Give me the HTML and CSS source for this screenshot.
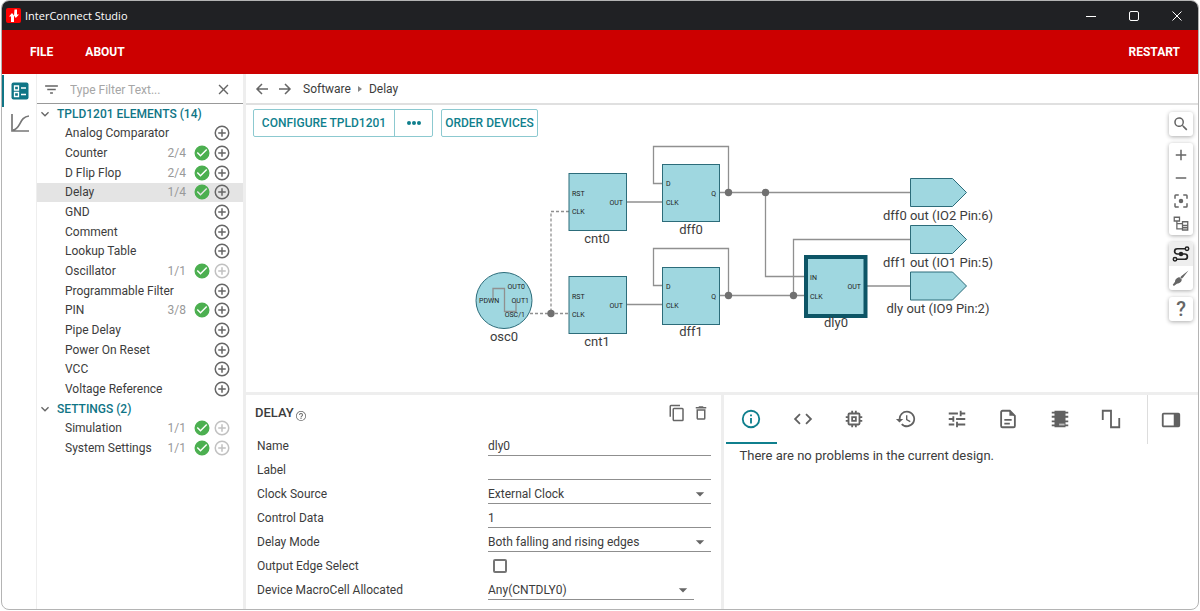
FILE: index.html
```html
<!DOCTYPE html>
<html lang="en">
<head>
<meta charset="utf-8">
<title>InterConnect Studio</title>
<link rel="stylesheet" href="styles.css">
</head>
<body>
<svg class="defs" aria-hidden="true">
  <symbol id="plus" viewBox="0 0 24 24"><path d="M13 7h-2v4H7v2h4v4h2v-4h4v-2h-4V7zm-1-5a10 10 0 1 0 0 20 10 10 0 0 0 0-20zm0 18a8 8 0 1 1 0-16 8 8 0 0 1 0 16z"/></symbol>
  <symbol id="check" viewBox="0 0 24 24"><path d="M12 2a10 10 0 1 0 0 20 10 10 0 0 0 0-20zm-2 15-5-5 1.400-1.400 3.600 3.600 7.600-7.600L19 8l-9 9z"/></symbol>
  <symbol id="chevron" viewBox="0 0 24 24"><path d="M7.400 8.600 12 13.200l4.600-4.600L18 10l-6 6-6-6z"/></symbol>
  <symbol id="caret" viewBox="0 0 24 24"><path d="m7 10 5 5 5-5z"/></symbol>
  <symbol id="cross" viewBox="0 0 24 24"><path d="M19 6.400 17.600 5 12 10.600 6.400 5 5 6.400l5.600 5.600L5 17.600 6.400 19l5.600-5.600 5.600 5.600 1.400-1.400-5.600-5.600z"/></symbol>
</svg>
<div class="window">
  <header class="titlebar">
    <svg class="logo" viewBox="0 0 15 15"><rect width="15" height="15" rx="2" fill="#f00"/><path d="M5 14V8.500H3L6 5l2 2.500V14zM8.500 1.500h2.500v5h2L9.800 10 8 7.500z" fill="#fff"/></svg>
    <span class="app-name">InterConnect Studio</span>
    <div class="window-controls">
      <button aria-label="Minimize"><svg viewBox="0 0 12 12"><path d="M1 6.500h10"/></svg></button>
      <button aria-label="Maximize"><svg viewBox="0 0 12 12"><rect x="1.500" y="1.500" width="9" height="9" rx="1.500"/></svg></button>
      <button aria-label="Close"><svg viewBox="0 0 12 12"><path d="m1.500 1.500 9 9m0-9-9 9"/></svg></button>
    </div>
  </header>
  <nav class="menubar">
    <button>FILE</button>
    <button>ABOUT</button>
    <button class="restart">RESTART</button>
  </nav>
  <div class="workspace">
    <nav class="rail">
      <button class="active" aria-label="Elements"><svg viewBox="0 0 18 18"><rect width="17" height="17" x=".5" y=".5" rx="2" fill="#0f7586"/><path d="M3.500 4h4v4h-4zM3.500 10.500h4v4h-4z" fill="none" stroke="#fff" stroke-width="1.300"/><path d="M10 6h5M10 12.500h5" stroke="#fff" stroke-width="1.500"/></svg></button>
      <button aria-label="Plots"><svg viewBox="0 0 18 18"><path d="M1 0v17h17M2 16C10 15 8 3 18 2" fill="none" stroke="#777" stroke-width="1.700"/></svg></button>
    </nav>
    <aside class="sidebar">
      <div class="filter">
        <svg viewBox="0 0 24 24"><path d="M10 18h4v-2h-4v2zM3 6v2h18V6H3zm3 7h12v-2H6v2z"/></svg>
        <input type="text" placeholder="Type Filter Text..." aria-label="Filter">
        <button aria-label="Clear filter"><svg viewBox="0 0 24 24"><use href="#cross"/></svg></button>
      </div>
      <div class="tree">
        <button class="group"><svg><use href="#chevron"/></svg>TPLD1201 ELEMENTS (14)</button>
        <div class="item"><a href="#">Analog Comparator</a><button aria-label="Add Analog Comparator"><svg><use href="#plus"/></svg></button></div>
        <div class="item"><a href="#">Counter</a><span>2/4</span><svg class="ok"><use href="#check"/></svg><button aria-label="Add Counter"><svg><use href="#plus"/></svg></button></div>
        <div class="item"><a href="#">D Flip Flop</a><span>2/4</span><svg class="ok"><use href="#check"/></svg><button aria-label="Add D Flip Flop"><svg><use href="#plus"/></svg></button></div>
        <div class="item selected"><a href="#">Delay</a><span>1/4</span><svg class="ok"><use href="#check"/></svg><button aria-label="Add Delay"><svg><use href="#plus"/></svg></button></div>
        <div class="item"><a href="#">GND</a><button aria-label="Add GND"><svg><use href="#plus"/></svg></button></div>
        <div class="item"><a href="#">Comment</a><button aria-label="Add Comment"><svg><use href="#plus"/></svg></button></div>
        <div class="item"><a href="#">Lookup Table</a><button aria-label="Add Lookup Table"><svg><use href="#plus"/></svg></button></div>
        <div class="item"><a href="#">Oscillator</a><span>1/1</span><svg class="ok"><use href="#check"/></svg><button disabled aria-label="Add Oscillator"><svg><use href="#plus"/></svg></button></div>
        <div class="item"><a href="#">Programmable Filter</a><button aria-label="Add Programmable Filter"><svg><use href="#plus"/></svg></button></div>
        <div class="item"><a href="#">PIN</a><span>3/8</span><svg class="ok"><use href="#check"/></svg><button aria-label="Add PIN"><svg><use href="#plus"/></svg></button></div>
        <div class="item"><a href="#">Pipe Delay</a><button aria-label="Add Pipe Delay"><svg><use href="#plus"/></svg></button></div>
        <div class="item"><a href="#">Power On Reset</a><button aria-label="Add Power On Reset"><svg><use href="#plus"/></svg></button></div>
        <div class="item"><a href="#">VCC</a><button aria-label="Add VCC"><svg><use href="#plus"/></svg></button></div>
        <div class="item"><a href="#">Voltage Reference</a><button aria-label="Add Voltage Reference"><svg><use href="#plus"/></svg></button></div>
        <button class="group"><svg><use href="#chevron"/></svg>SETTINGS (2)</button>
        <div class="item"><a href="#">Simulation</a><span>1/1</span><svg class="ok"><use href="#check"/></svg><button disabled aria-label="Add Simulation"><svg><use href="#plus"/></svg></button></div>
        <div class="item"><a href="#">System Settings</a><span>1/1</span><svg class="ok"><use href="#check"/></svg><button disabled aria-label="Add System Settings"><svg><use href="#plus"/></svg></button></div>
      </div>
    </aside>
    <main class="content">
      <div class="breadcrumb">
        <button aria-label="Back"><svg viewBox="0 0 14 14"><path d="M13 7H2m5-5L2 7l5 5"/></svg></button>
        <button aria-label="Forward"><svg viewBox="0 0 14 14"><path d="M1 7h11M7 2l5 5-5 5"/></svg></button>
        <a href="#">Software</a>
        <svg class="sep" viewBox="0 0 4 8"><path d="m0 1 4 3-4 3z"/></svg>
        <a href="#">Delay</a>
      </div>
      <section class="canvas">
        <svg class="diagram" role="img" aria-label="Circuit diagram">
          <g transform="translate(-246 -105)">
            <g class="wire">
              <path d="M627 202h35M662 183.500h-8.500v-37h75v46M720 192.500h190M765.500 192.500v84H805"/>
              <path d="M627 304.500h35M662 285.500h-8.500v-37h75v47M720 295.500h85M793.500 295.500v-56H910M867 286h43"/>
              <path class="dashed" d="M569 211.500h-18v102M530 313.500h39"/>
            </g>
            <g class="block">
              <rect x="569" y="173.500" width="57.500" height="57"/>
              <rect x="662.500" y="164.500" width="57" height="57"/>
              <rect x="569" y="276.500" width="57.500" height="57"/>
              <rect x="662.500" y="267.500" width="57" height="57"/>
              <circle cx="504" cy="300.500" r="28"/>
              <path d="M910.500 178.500h42l14 14-14 14h-42zM910.500 225.500h42l14 14-14 14h-42zM910.500 272h42l14 14-14 14h-42z"/>
              <rect class="current" x="806" y="257" width="59.500" height="59"/>
            </g>
            <path class="wire" d="M493 300v-11.500h11.500v23H516V302"/>
            <g class="dot"><circle cx="728.500" cy="192.500" r="3.700"/><circle cx="765.500" cy="192.500" r="3.700"/><circle cx="728.500" cy="295.500" r="3.700"/><circle cx="793.500" cy="295.500" r="3.700"/><circle cx="551" cy="313.500" r="3.700"/></g>
            <g class="port">
              <text x="572" y="196">RST</text><text x="572" y="214">CLK</text><text class="end" x="623" y="205">OUT</text>
              <text x="666" y="186">D</text><text x="666" y="205">CLK</text><text class="end" x="716" y="196">Q</text>
              <text x="572" y="299">RST</text><text x="572" y="317">CLK</text><text class="end" x="623" y="308">OUT</text>
              <text x="666" y="289">D</text><text x="666" y="308">CLK</text><text class="end" x="716" y="299">Q</text>
              <text x="810" y="280">IN</text><text x="810" y="299">CLK</text><text class="end" x="861" y="289">OUT</text>
              <text x="479" y="303">PDWN</text><text class="end" x="525" y="289">OUT0</text><text class="end" x="529" y="303">OUT1</text><text class="end" x="525" y="317">OSC/1</text>
            </g>
            <g class="name">
              <text x="597" y="243">cnt0</text><text x="691" y="234">dff0</text><text x="597" y="346">cnt1</text><text x="691" y="336">dff1</text><text x="504" y="341">osc0</text><text x="836" y="327">dly0</text>
              <text x="938" y="220">dff0 out (IO2 Pin:6)</text><text x="938" y="267">dff1 out (IO1 Pin:5)</text><text x="938" y="313">dly out (IO9 Pin:2)</text>
            </g>
          </g>
        </svg>
        <div class="actions">
          <div class="split"><button>CONFIGURE TPLD1201</button><button class="more" aria-label="More"><svg viewBox="0 0 14 4"><circle cx="2" cy="2" r="2"/><circle cx="7" cy="2" r="2"/><circle cx="12" cy="2" r="2"/></svg></button></div>
          <button class="order">ORDER DEVICES</button>
        </div>
        <div class="tools">
          <div><button aria-label="Search"><svg viewBox="0 0 24 24"><path d="M15.500 14h-.8l-.3-.3a6.500 6.500 0 1 0-.7.7l.3.3v.8l5 5 1.500-1.500-5-5zm-6 0a4.500 4.500 0 1 1 0-9 4.500 4.500 0 0 1 0 9z"/></svg></button></div>
          <div>
            <button aria-label="Zoom in"><svg viewBox="0 0 24 24"><path d="M19 13h-6v6h-2v-6H5v-2h6V5h2v6h6z"/></svg></button>
            <button aria-label="Zoom out"><svg viewBox="0 0 24 24"><path d="M19 13H5v-2h14z"/></svg></button>
            <button aria-label="Fit"><svg viewBox="0 0 24 24"><path d="M5 15H3v4c0 1.100.9 2 2 2h4v-2H5v-4zM5 5h4V3H5a2 2 0 0 0-2 2v4h2V5zm14-2h-4v2h4v4h2V5a2 2 0 0 0-2-2zm0 16h-4v2h4a2 2 0 0 0 2-2v-4h-2v4zM12 9a3 3 0 1 0 0 6 3 3 0 0 0 0-6z"/></svg></button>
            <button aria-label="Auto layout"><svg viewBox="0 0 24 24"><path d="M3 3h7v5H3zM14 9h7v5h-7zM14 14h7v6h-7zM6.500 8v10.500H14M6.500 11.500H14M14 17h7" fill="none" stroke="#666" stroke-width="1.700"/></svg></button>
          </div>
          <div>
            <button class="on" aria-label="Wires"><svg viewBox="0 0 24 24"><path d="M19 5H7a3.500 3.500 0 0 0 0 7h10a3.500 3.500 0 0 1 0 7H5" fill="none" stroke="#222" stroke-width="2.300"/><circle cx="12" cy="12" r="3" fill="#222"/><circle cx="20" cy="5" r="2.300" fill="#eee" stroke="#222" stroke-width="2"/><circle cx="4" cy="19" r="2.300" fill="#eee" stroke="#222" stroke-width="2"/></svg></button>
            <button aria-label="Probe"><svg viewBox="0 0 24 24"><path d="m22 2-9 7-2 2 2 2 2-2zM10 11c-3 0-6 3-6 6l-3 4 1.500 1.500 4-3c4 0 6.500-3 6.500-5.500z"/></svg></button>
          </div>
          <div><button class="help" aria-label="Help">?</button></div>
        </div>
      </section>
      <div class="bottom">
        <section class="properties">
          <div class="heading">
            <h2>DELAY</h2>
            <svg class="hint" viewBox="0 0 24 24"><path d="M11 18h2v-2h-2v2zm1-16a10 10 0 1 0 0 20 10 10 0 0 0 0-20zm0 18.500a8.500 8.500 0 1 1 0-17 8.500 8.500 0 0 1 0 17zM12 6a4 4 0 0 0-4 4h2a2 2 0 1 1 4 0c0 2-3 1.800-3 5h2c0-2.200 3-2.500 3-5a4 4 0 0 0-4-4z"/></svg>
            <button aria-label="Duplicate"><svg viewBox="0 0 24 24"><path d="M16 1H4a2 2 0 0 0-2 2v14h2V3h12V1zm3 4H8a2 2 0 0 0-2 2v14c0 1.100.9 2 2 2h11a2 2 0 0 0 2-2V7a2 2 0 0 0-2-2zm0 16H8V7h11v14z"/></svg></button>
            <button aria-label="Delete"><svg viewBox="0 0 24 24"><path d="M6 19c0 1.100.9 2 2 2h8a2 2 0 0 0 2-2V7H6v12zM8 9h8v10H8V9zm7.500-5-1-1h-5l-1 1H5v2h14V4z"/></svg></button>
          </div>
          <form class="fields">
            <label for="f-name">Name</label><div class="field"><input id="f-name" type="text" value="dly0"></div>
            <label for="f-label">Label</label><div class="field"><input id="f-label" type="text"></div>
            <label for="f-clock">Clock Source</label><div class="field"><select id="f-clock"><option>External Clock</option></select><svg><use href="#caret"/></svg></div>
            <label for="f-data">Control Data</label><div class="field"><input id="f-data" type="text" value="1"></div>
            <label for="f-mode">Delay Mode</label><div class="field"><select id="f-mode"><option>Both falling and rising edges</option></select><svg><use href="#caret"/></svg></div>
            <label for="f-edge">Output Edge Select</label><div class="tick"><input id="f-edge" type="checkbox"></div>
            <label for="f-cell">Device MacroCell Allocated</label><div class="field short"><select id="f-cell"><option>Any(CNTDLY0)</option></select><svg><use href="#caret"/></svg></div>
          </form>
        </section>
        <section class="output">
          <div class="tabs">
            <button class="active" aria-label="Problems"><svg viewBox="0 0 24 24"><path d="M11 7h2v2h-2zm0 4h2v6h-2zm1-9a10 10 0 1 0 0 20 10 10 0 0 0 0-20zm0 18a8 8 0 1 1 0-16 8 8 0 0 1 0 16z"/></svg></button>
            <button aria-label="Code"><svg viewBox="0 0 24 24"><path d="M9.400 16.600 4.800 12l4.600-4.600L8 6l-6 6 6 6zm5.200 0 4.600-4.600-4.600-4.600L16 6l6 6-6 6z"/></svg></button>
            <button aria-label="Device"><svg viewBox="0 0 24 24"><path d="M15 9H9v6h6V9zm-2 4h-2v-2h2v2zm8-2V9h-2V7a2 2 0 0 0-2-2h-2V3h-2v2h-2V3H9v2H7a2 2 0 0 0-2 2v2H3v2h2v2H3v2h2v2c0 1.100.9 2 2 2h2v2h2v-2h2v2h2v-2h2a2 2 0 0 0 2-2v-2h2v-2h-2v-2h2zm-4 6H7V7h10v10z"/></svg></button>
            <button aria-label="History"><svg viewBox="0 0 24 24"><path d="M13 3a9 9 0 0 0-9 9H1l3.900 3.900L9 12H6a7 7 0 1 1 2.100 4.900l-1.500 1.500A9 9 0 1 0 13 3zm-1 5v5l4.300 2.500.7-1.200-3.500-2.100V8z"/></svg></button>
            <button aria-label="Tuning"><svg viewBox="0 0 24 24"><path d="M3 17v2h6v-2H3zM3 5v2h10V5H3zm10 16v-2h8v-2h-8v-2h-2v6h2zM7 9v2H3v2h4v2h2V9H7zm14 4v-2H11v2h10zm-6-4h2V7h4V5h-4V3h-2v6z"/></svg></button>
            <button aria-label="Report"><svg viewBox="0 0 24 24"><path d="M14 3H6a1.500 1.500 0 0 0-1.500 1.500v15A1.500 1.500 0 0 0 6 21h12a1.500 1.500 0 0 0 1.500-1.500v-11z" fill="none" stroke="#616161" stroke-width="2"/><path d="M13.500 2.500v6h6zM8 12h8v2H8zM8 16h6v2H8z"/></svg></button>
            <button aria-label="Chip"><svg viewBox="0 0 24 24"><path d="M6 3h12v18H6zM3 4h18v2H3zM3 8.500h18v2H3zM3 13.500h18v2H3zM3 18h18v2H3z"/><path d="M11 17h6v2h-6z" fill="#bbb"/></svg></button>
            <button aria-label="Waveform"><svg viewBox="0 0 24 24"><path d="M3 13V3h9v18h9V11" fill="none" stroke="#616161" stroke-width="2"/></svg></button>
            <button class="dock" aria-label="Toggle panel"><svg viewBox="0 0 24 24"><path d="M4 4a2 2 0 0 0-2 2v12c0 1.100.9 2 2 2h16a2 2 0 0 0 2-2V6a2 2 0 0 0-2-2zm0 2h11v12H4z"/></svg></button>
          </div>
          <p>There are no problems in the current design.</p>
        </section>
      </div>
    </main>
  </div>
</div>
</body>
</html>
```
FILE: styles.css
```css
* { box-sizing: border-box; }
body { margin: 0; background: #fff; color: #3c3c3c; font: 12px/20px Roboto, "Liberation Sans", sans-serif; }
button, input, select { margin: 0; padding: 0; border: 0; background: none; color: inherit; font: inherit; }
button { display: flex; align-items: center; justify-content: center; cursor: pointer; white-space: nowrap; }
a { color: inherit; text-decoration: none; }
svg { display: block; flex: none; fill: #666; }
.defs { position: absolute; width: 0; height: 0; }

.window { display: flex; flex-direction: column; height: calc(100vh - 1px); margin: 0 1px; border: 1px solid #b4b4b4; border-radius: 8px; overflow: hidden; }
.titlebar { display: flex; flex: none; align-items: center; gap: 4px; height: 29px; padding-left: 4px; background: #202124; color: #fff; font: 11px/16px "Open Sans", sans-serif; }
.logo { width: 15px; height: 15px; }
.window-controls { display: flex; margin-left: auto; }
.window-controls button { width: 43px; height: 29px; }
.window-controls svg { width: 12px; height: 12px; fill: none; stroke: #fff; }

.menubar { display: flex; flex: none; align-items: center; gap: 32px; height: 44px; padding: 0 18px 0 28px; background: #c00; color: #fff; font-weight: 700; }
.restart { margin-left: auto; }

.workspace { display: flex; flex: 1; min-height: 0; }
.rail { flex: none; width: 34px; padding-top: 1px; }
.rail button { width: 34px; height: 32px; border-left: 2px solid transparent; }
.rail .active { border-color: #0f7586; }
.rail svg { width: 18px; height: 18px; }

.sidebar { flex: none; width: 210px; border-left: 1px solid #eee; border-right: 3px solid #eee; }
.filter { display: flex; align-items: center; height: 30px; padding: 2px 11px 0 6px; border-bottom: 1px solid #999; }
.filter svg { width: 17px; height: 17px; }
.filter input { flex: 1; min-width: 0; padding-left: 10px; outline: 0; }
.filter input::placeholder { color: #a6a6a6; opacity: 1; }
.tree { display: grid; grid-auto-rows: 1fr; height: 354px; line-height: 18px; }
.group { justify-content: flex-start; gap: 4px; color: #0f7586; font-weight: 500; }
.group svg { width: 16px; height: 16px; }
.item { display: flex; align-items: center; gap: 2px; padding: 0 12px 0 28px; }
.item a { flex: 1; }
.item span { margin-right: 5px; color: #999; }
.item svg { width: 18px; height: 18px; }
.item .ok { fill: #4caf50; }
.item button:disabled { opacity: .4; }
.selected { background: #e4e4e4; }

.content { display: flex; flex: 1; flex-direction: column; min-width: 0; }
.breadcrumb { display: flex; flex: none; align-items: center; gap: 9px; height: 31px; padding: 0 9px; border-bottom: 2px solid #e0e0e0; }
.breadcrumb a:first-of-type { margin-left: 2px; }
.breadcrumb svg { width: 14px; height: 14px; fill: none; stroke: #666; stroke-width: 1.5; }
.breadcrumb .sep { width: 4px; height: 8px; margin: 0 -2px; fill: #888; stroke: none; }
.canvas { position: relative; flex: 1; min-height: 0; overflow: hidden; }
.diagram { width: 100%; height: 100%; }
.wire { fill: none; stroke: #909090; stroke-width: 1.3; }
.dashed { stroke-dasharray: 3 2; }
.block { fill: #9fd7e0; stroke: #2c6c7a; }
.block .current { stroke: #0d5566; stroke-width: 4; }
.dot { fill: #707070; }
.port { fill: #222; font-size: 7px; }
.end { text-anchor: end; }
.name { fill: #3c3c3c; font-size: 13px; text-anchor: middle; }
.actions { position: absolute; top: 4px; left: 7px; display: flex; gap: 8px; color: #0f7f8d; font-weight: 500; }
.split, .order { display: flex; height: 28px; border: 1px solid #8cc9d0; border-radius: 2px; }
.split button { width: 140px; }
.split .more { width: 38px; border-left: 1px solid #8cc9d0; }
.more svg { width: 14px; height: 4px; fill: #0f7f8d; }
.order { width: 97px; }
.tools { position: absolute; top: 7px; right: 5px; display: grid; gap: 7px; }
.tools div { border-radius: 3px; background: #fff; box-shadow: 0 1px 4px #0005; overflow: hidden; }
.tools button { width: 24px; height: 24px; }
.tools div:nth-child(2) button { height: 23px; }
.tools svg { width: 18px; height: 18px; }
.tools .on { background: #eee; }
.tools .help { color: #666; font-size: 20px; font-weight: 500; }

.bottom { display: grid; flex: none; grid-template-columns: 477fr 474fr; height: 217px; border-top: 3px solid #eee; }
.properties { padding: 6px 10px 0 9px; border-right: 3px solid #eee; }
.heading { display: flex; align-items: center; height: 24px; margin-bottom: 9px; padding-right: 1px; }
h2 { margin: 0; font-size: 13px; font-weight: 500; }
.hint { width: 12px; height: 12px; margin: 6px auto 0 1px; }
.heading button { margin-left: 6px; }
.heading button svg { width: 18px; height: 18px; }
.fields { display: grid; grid-template-columns: 231px 1fr; grid-auto-rows: 24px; align-items: center; padding-left: 2px; }
.field { position: relative; height: 20px; border-bottom: 1px solid #8f8f8f; }
.field input, .field select { display: block; width: 100%; height: 19px; appearance: none; outline: 0; }
.field svg { position: absolute; top: 0; right: 1px; width: 20px; height: 20px; pointer-events: none; }
.short { margin-right: 17px; }
.tick { padding-left: 5px; }
.tick input { display: block; width: 14px; height: 14px; appearance: none; border: 2px solid #757575; border-radius: 2px; }

.output { min-width: 0; padding-left: 2px; }
.tabs { display: flex; height: 49px; }
.tabs button { flex: 1; border-bottom: 2px solid transparent; }
.tabs svg { width: 22px; height: 22px; fill: #616161; }
.tabs .active { border-color: #0f7f8d; }
.tabs .active svg { fill: #0f7f8d; }
.tabs .dock { flex: none; width: 51px; margin-left: 10px; padding-right: 5px; border-left: 1px solid #ddd; border-bottom: 0; }
.output p { margin: 2px 0 0 14px; font-size: 13px; }
```
